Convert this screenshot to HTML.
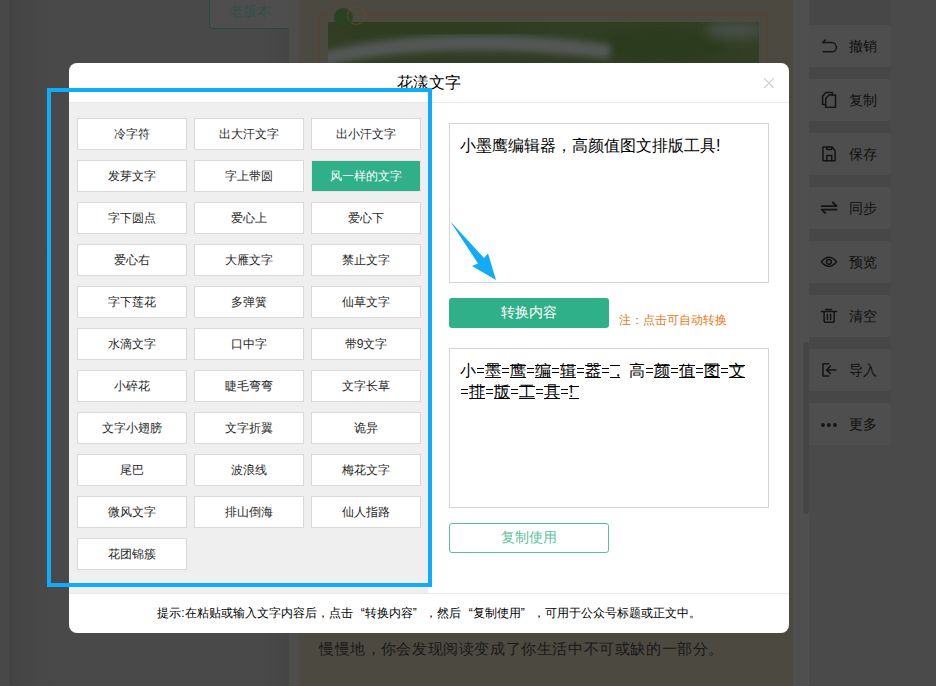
<!DOCTYPE html>
<html><head><meta charset="utf-8">
<style>
*{box-sizing:border-box;margin:0;padding:0}
html,body{width:936px;height:686px;overflow:hidden;background:#494949;font-family:"Liberation Sans",sans-serif;position:relative}
.abs{position:absolute}
/* background page */
#lstrip{left:0;top:0;width:56px;height:686px;background:linear-gradient(to right,#484848 0,#484848 9px,#434343 9px,#464646 22px,#494949 56px)}
#oldbtn{left:209px;top:-10px;width:80px;height:39px;border:1px solid #294a42;border-right:none;border-radius:4px 0 0 4px;background:#4e4e4e;color:#30504a;font-size:14px;line-height:41px;text-indent:19px}
#gap{left:289px;top:0;width:10px;height:686px;background:#4d4d4d}
#paper{left:299px;top:0;width:494px;height:686px;background:#4c4941}
#bgtext{left:319px;top:640px;font-size:15px;letter-spacing:0.6px;color:#181818;white-space:nowrap}
#rgap{left:793px;top:0;width:16px;height:686px;background:#4f4f4f}
#rcol{left:809px;top:0;width:127px;height:686px;background:#4a4a4a}
#rstrip{left:809px;top:0;width:82px;height:445px;background:#474747}
#scroll{left:803px;top:342px;width:6px;height:172px;background:#464646;border-radius:3px}
.tb{position:absolute;left:809px;width:82px;height:42px;background:#4e4e4e;border-radius:0 3px 3px 0;color:#0e0e0e;font-size:14px}
.tb span{position:absolute;left:40px;top:13px;line-height:17px}
/* modal */
#modal{left:69px;top:63px;width:720px;height:570px;background:#fff;border-radius:8px;overflow:hidden}
#title{left:0;top:0;width:720px;height:40px;border-bottom:1px solid #e8e8e8;text-align:center;font-size:16px;line-height:40px;color:#000}
#close{left:690px;top:10px;width:20px;height:20px}
#grid{left:0;top:40px;width:359px;height:490px;background:#efefef}
.b{position:absolute;width:110px;height:32px;background:#fff;border:1px solid #d9d9d9;font-size:12px;color:#262626;text-align:center;line-height:30px}
.b.on{background:#30b088;border-color:#e6e6e6;color:#fff}
#ta1{left:380px;top:60px;width:320px;height:160px;border:1px solid #d5d5d5;font-size:16px;color:#000;padding:11px 0 0 10px;line-height:22px}
#conv{left:380px;top:235px;width:160px;height:30px;background:#30b088;border-radius:3px;color:#fff;font-size:14px;text-align:center;line-height:28px}
#note{left:550px;top:249px;font-size:12px;color:#ec7814;line-height:16px}
#ta2{left:380px;top:285px;width:320px;height:160px;border:1px solid #d5d5d5;font-size:16px;color:#000;padding:11px 0 0 10px;line-height:21px}
#ta2 .ln{height:21px;white-space:nowrap}
#ta2 i{font-style:normal;display:inline-block;height:21px;vertical-align:top;position:relative}
#ta2 .c{width:16px}
#ta2 .e{width:9px}
#ta2 .e::before,#ta2 .e::after{content:'';position:absolute;left:1px;width:7px;height:1px;background:#000;top:8px}
#ta2 .e::after{top:12px}
#ta2 .u::before,#ta2 .u::after{content:'';position:absolute;left:0;right:0;height:1px;background:#000;top:5px}
#ta2 .u::after{top:17px}
#copy{left:380px;top:460px;width:160px;height:30px;border:1px solid #5cbf9c;border-radius:3px;color:#5cbf9c;font-size:14px;text-align:center;line-height:27px}
#foot{left:0;top:530px;width:720px;height:40px;border-top:1px solid #e8e8e8;text-align:center;font-size:12px;line-height:39px;color:#000}
#blue{left:47px;top:88px;width:385px;height:499px;border:4px solid #10acfa}
#arrow{left:440px;top:210px}
.fl{display:inline-block;width:1em;text-align:left}
.fr{display:inline-block;width:1em;text-align:right}
</style></head><body>
<div id="lstrip" class="abs"></div>

<div id="gap" class="abs"></div>
<div class="abs" style="left:262px;top:0;width:27px;height:686px;background:linear-gradient(to right,#494949,#454545)"></div>
<div id="oldbtn" class="abs">老版本</div>
<div id="paper" class="abs"></div>
<svg class="abs" style="left:0;top:0" width="936" height="80" viewBox="0 0 936 80">
<defs>
<filter id="bl" x="-20%" y="-50%" width="140%" height="200%"><feGaussianBlur stdDeviation="3.5"/></filter>
<filter id="bl2" x="-20%" y="-50%" width="140%" height="200%"><feGaussianBlur stdDeviation="6"/></filter>
<clipPath id="pc"><rect x="328" y="22" width="431" height="58"/></clipPath>
</defs>
<path d="M319.5 80V15.5H767.5V80" fill="none" stroke="#5a4231" stroke-width="1"/>
<g clip-path="url(#pc)">
<rect x="328" y="22" width="431" height="58" fill="#323e24"/>
<ellipse cx="430" cy="27" rx="110" ry="6" fill="#2d3a1f" filter="url(#bl2)"/>
<ellipse cx="660" cy="45" rx="70" ry="16" fill="#2c3a1b" filter="url(#bl2)"/>
<ellipse cx="735" cy="30" rx="30" ry="9" fill="#475046" filter="url(#bl2)"/>
<path d="M322 60Q440 30 610 52" fill="none" stroke="#545856" stroke-width="15" filter="url(#bl)"/><path d="M322 70Q440 50 610 64" fill="none" stroke="#2f3a26" stroke-width="3" filter="url(#bl)"/>
</g>
<circle cx="343.4" cy="17.3" r="9.4" fill="#2a4222"/>
<circle cx="356.5" cy="15.4" r="9" fill="none" stroke="#674a30" stroke-width="0.9" stroke-dasharray="6 1.2"/>
</svg>
<div id="bgtext" class="abs">慢慢地<span class=fl>，</span>你会发现阅读变成了你生活中不可或缺的一部分。</div>
<div id="rgap" class="abs"></div>
<div id="rcol" class="abs"></div>
<div id="rstrip" class="abs"></div>
<div id="scroll" class="abs"></div>

<div class="tb" style="top:25px"><span>撤销</span></div>
<div class="tb" style="top:79px"><span>复制</span></div>
<div class="tb" style="top:133px"><span>保存</span></div>
<div class="tb" style="top:187px"><span>同步</span></div>
<div class="tb" style="top:241px"><span>预览</span></div>
<div class="tb" style="top:295px"><span>清空</span></div>
<div class="tb" style="top:349px"><span>导入</span></div>
<div class="tb" style="top:403px"><span>更多</span></div>

<svg class="abs" style="left:0;top:0" width="936" height="686" viewBox="0 0 936 686" fill="none" stroke="#141414" stroke-width="1.5" stroke-linecap="round" stroke-linejoin="round">
<path d="M825.3 40L822.5 42.6H831.75A4.62 4.62 0 0 1 831.75 51.85H823.2"/>
<path d="M825.7 98.5L829 95H835.5V107.2H825.7Z"/><path d="M832.3 95V92.4H826L822.6 96V104.4H825.7"/>
<path d="M823 147H832.3L835.1 150.8V160.8H823Z"/><path d="M826.8 147V149.5H831.7V147M826.8 160.8V155.5H831.7V160.8"/>
<path d="M821.7 206.1H836.6L832.9 202.5M836.6 209.7H821.7L825.3 213" stroke-width="1.8"/>
<path d="M821.3 261.8Q828.9 252.5 836.6 261.8Q828.9 271 821.3 261.8Z"/><circle cx="828.9" cy="261.8" r="2.4"/>
<path d="M821.3 311.5H836.6M825.7 309.4H831.3M824.1 311.5V320.5Q824.1 322.3 826 322.3H832.3Q834.2 322.3 834.2 320.5V311.5M827.4 314.3V319.4M830.6 314.3V319.4"/>
<path d="M828.7 363.8H823V375.9H828.7M835.9 369.9H826.8M830.4 366L826.6 369.9L830.4 373.6"/>
<g fill="#141414" stroke="none"><circle cx="823" cy="425" r="1.9"/><circle cx="828.9" cy="425" r="1.9"/><circle cx="834.9" cy="425" r="1.9"/></g>
</svg>
<div id="modal" class="abs">
  <div id="title" class="abs">花漾文字</div>
  <svg id="close" class="abs" viewBox="0 0 20 20"><path d="M5.1 5.1L14.8 15M14.8 5.1L5.1 15" stroke="#cfcfcf" stroke-width="1.2"/></svg>
  <div id="grid" class="abs">
    <div class="b" style="left:8px;top:15px">冷字符</div>
    <div class="b" style="left:125px;top:15px">出大汗文字</div>
    <div class="b" style="left:242px;top:15px">出小汗文字</div>
    <div class="b" style="left:8px;top:57px">发芽文字</div>
    <div class="b" style="left:125px;top:57px">字上带圆</div>
    <div class="b on" style="left:242px;top:57px">风一样的文字</div>
    <div class="b" style="left:8px;top:99px">字下圆点</div>
    <div class="b" style="left:125px;top:99px">爱心上</div>
    <div class="b" style="left:242px;top:99px">爱心下</div>
    <div class="b" style="left:8px;top:141px">爱心右</div>
    <div class="b" style="left:125px;top:141px">大雁文字</div>
    <div class="b" style="left:242px;top:141px">禁止文字</div>
    <div class="b" style="left:8px;top:183px">字下莲花</div>
    <div class="b" style="left:125px;top:183px">多弹簧</div>
    <div class="b" style="left:242px;top:183px">仙草文字</div>
    <div class="b" style="left:8px;top:225px">水滴文字</div>
    <div class="b" style="left:125px;top:225px">口中字</div>
    <div class="b" style="left:242px;top:225px">带9文字</div>
    <div class="b" style="left:8px;top:267px">小碎花</div>
    <div class="b" style="left:125px;top:267px">睫毛弯弯</div>
    <div class="b" style="left:242px;top:267px">文字长草</div>
    <div class="b" style="left:8px;top:309px">文字小翅膀</div>
    <div class="b" style="left:125px;top:309px">文字折翼</div>
    <div class="b" style="left:242px;top:309px">诡异</div>
    <div class="b" style="left:8px;top:351px">尾巴</div>
    <div class="b" style="left:125px;top:351px">波浪线</div>
    <div class="b" style="left:242px;top:351px">梅花文字</div>
    <div class="b" style="left:8px;top:393px">微风文字</div>
    <div class="b" style="left:125px;top:393px">排山倒海</div>
    <div class="b" style="left:242px;top:393px">仙人指路</div>
    <div class="b" style="left:8px;top:435px">花团锦簇</div>
  </div>
  <div id="ta1" class="abs">小墨鹰编辑器<span class=fl>，</span>高颜值图文排版工具!</div>
  <div id="conv" class="abs">转换内容</div>
  <div id="note" class="abs">注<span class=fl>：</span>点击可自动转换</div>
  <div id="ta2" class="abs"><div class="ln"><i class="c">小</i><i class="e"></i><i class="u" style="width:16px">墨</i><i class="e"></i><i class="u" style="width:16px">鹰</i><i class="e"></i><i class="u" style="width:16px">编</i><i class="e"></i><i class="u" style="width:16px">辑</i><i class="e"></i><i class="u" style="width:16px">器</i><i class="e"></i><i class="u" style="width:10px">，</i><i class="c" style="width:8.5px"></i><i class="c">高</i><i class="e"></i><i class="u" style="width:16px">颜</i><i class="e"></i><i class="u" style="width:16px">值</i><i class="e"></i><i class="u" style="width:16px">图</i><i class="e"></i><i class="u" style="width:16px">文</i></div><div class="ln"><i class="e"></i><i class="u" style="width:16px">排</i><i class="e"></i><i class="u" style="width:16px">版</i><i class="e"></i><i class="u" style="width:16px">工</i><i class="e"></i><i class="u" style="width:16px">具</i><i class="e"></i><i class="u" style="width:10px">!</i></div></div>
  <div id="copy" class="abs">复制使用</div>
  <div id="foot" class="abs">提示:在粘贴或输入文字内容后<span class=fl>，</span>点击<span class=fr>“</span>转换内容<span class=fl>”</span><span class=fl>，</span>然后<span class=fr>“</span>复制使用<span class=fl>”</span><span class=fl>，</span>可用于公众号标题或正文中。</div>
</div>
<div id="blue" class="abs"></div>
<svg id="arrow" class="abs" width="70" height="80" viewBox="440 210 70 80"><path d="M450 221L484 258L488 253.4L496 280L472 266L478 263.4Z" fill="#10acfa"/></svg>
</body></html>
